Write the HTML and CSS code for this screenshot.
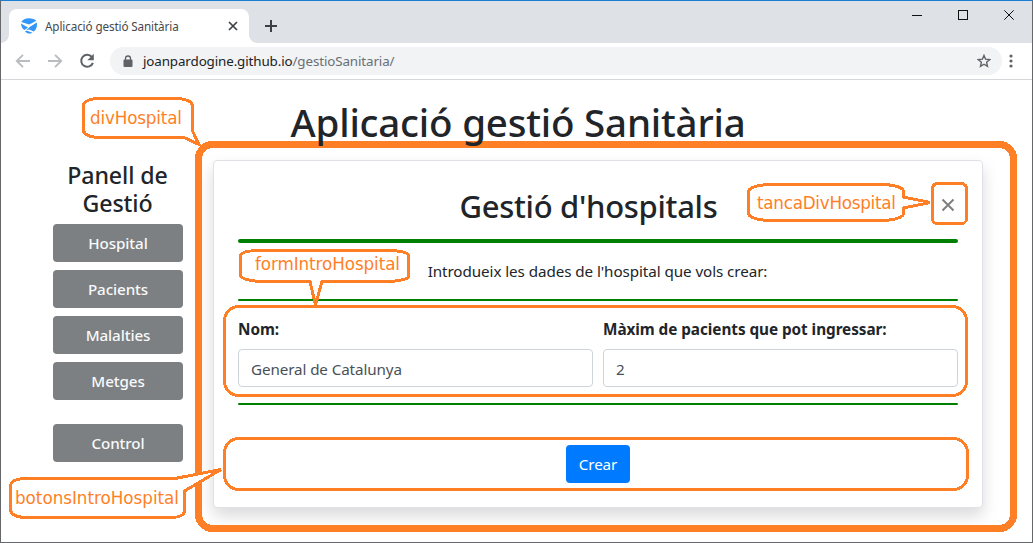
FILE: index.html
```html
<!DOCTYPE html>
<html lang="ca">
<head>
<meta charset="utf-8">
<title>Aplicació gestió Sanitària</title>
<link rel="stylesheet" href="styles.css">
</head>
<body>
<div class="window">
  <header class="tabbar">
    <div class="tab">
      <svg class="favicon" width="16" height="16" viewBox="0 0 16 16"><path fill="#3397f7" d="M.2 4C1.500 1.500 4.500.2 8 .2c3.200 0 6 .8 7.300 2.600L8.300 6.600z M0 5.400l7 4.200-3.500 2.400C1.500 11 .2 8.500 0 5.400z M15.800 4.400c.7 3.700-.5 7-3 9.200L8 11.500l-3 1L9 8.800z M4 13.200l2-.4 5.500 1.900c-2.500 1.400-5.500 1.200-7.500-1.500z"/></svg>
      <span class="tab-title">Aplicació gestió Sanitària</span>
      <svg class="tab-close" width="10" height="10" viewBox="0 0 10 10"><path d="M1 1l8 8M9 1l-8 8" stroke="#3c4043" stroke-width="1.700"/></svg>
    </div>
    <svg class="new-tab" width="12" height="12" viewBox="0 0 12 12"><path d="M6 0v12M0 6h12" stroke="#3c4043" stroke-width="2"/></svg>
    <svg class="controls" width="104" height="12" viewBox="0 0 104 12"><path d="M0 6.500h10M46.500 1.500h9v9h-9z" fill="none" stroke="#111" shape-rendering="crispEdges"/><path d="M92.300 1.300l9.400 9.400M101.700 1.300l-9.400 9.400" stroke="#111"/></svg>
  </header>
  <nav class="toolbar">
    <svg width="16" height="16" viewBox="0 0 16 16" fill="none" stroke="#babcbe" stroke-width="1.900"><path d="M15 8H2M8 1.800L1.800 8 8 14.200"/></svg>
    <svg width="16" height="16" viewBox="0 0 16 16" fill="none" stroke="#babcbe" stroke-width="1.900"><path d="M1 8h13M8 1.800L14.200 8 8 14.200"/></svg>
    <svg width="16" height="16" viewBox="0 0 16 16"><path d="M12.900 4A6 6 0 1 0 13.900 9.800" fill="none" stroke="#5f6368" stroke-width="2"/><path d="M14.800.8v6.400H8.400z" fill="#5f6368"/></svg>
    <div class="address">
      <svg width="10" height="13" viewBox="0 0 10 13"><rect x="0.500" y="4.500" width="9" height="7.500" rx="1" fill="#5f6368"/><path d="M2.500 5V3.500a2.500 2.500 0 0 1 5 0V5" fill="none" stroke="#5f6368" stroke-width="1.300"/></svg>
      <span class="url"><span class="host">joanpardogine.github.io</span>/gestioSanitaria/</span>
      <svg class="star" width="14" height="14" viewBox="0 0 14 14"><path d="M7 1.400l1.600 3.800 4.100.4-3.100 2.700.9 4L7 10.200l-3.500 2.100.9-4L1.300 5.600l4.100-.4z" fill="none" stroke="#5f6368" stroke-width="1.400"/></svg>
    </div>
    <svg width="4" height="14" viewBox="0 0 4 14" fill="#5f6368"><circle cx="2" cy="2" r="1.600"/><circle cx="2" cy="7" r="1.600"/><circle cx="2" cy="12" r="1.600"/></svg>
  </nav>
  <main class="page">
    <h1>Aplicació gestió Sanitària</h1>
    <div class="columns">
      <aside class="panel">
        <h4>Panell de Gestió</h4>
        <button class="btn">Hospital</button>
        <button class="btn">Pacients</button>
        <button class="btn">Malalties</button>
        <button class="btn">Metges</button>
        <button class="btn spaced">Control</button>
      </aside>
      <section class="card">
        <div class="card-head">
          <h2>Gestió d'hospitals</h2>
          <svg class="close" width="14" height="14" viewBox="0 0 14 14"><path d="M1.500 1.500l11 11M12.500 1.500l-11 11" stroke="#7f7f7f" stroke-width="2"/></svg>
        </div>
        <hr class="thick">
        <p>Introdueix les dades de l'hospital que vols crear:</p>
        <hr>
        <form class="fields">
          <label><span class="caption">Nom:</span><input type="text" value="General de Catalunya"></label>
          <label><span class="caption">Màxim de pacients que pot ingressar:</span><input type="text" value="2"></label>
        </form>
        <hr>
        <div class="actions"><button class="btn primary">Crear</button></div>
      </section>
    </div>
  </main>
  <svg class="notes" width="1033" height="543" viewBox="0 0 1033 543">
    <g class="outline" shape-rendering="crispEdges">
      <rect class="frame" x="198.500" y="144.500" width="815" height="384" rx="14"/>
      <rect x="224.500" y="306.500" width="742" height="89" rx="14"/>
      <rect x="224.500" y="438.500" width="743" height="51" rx="14"/>
      <rect x="932.500" y="183.500" width="34" height="40" rx="5"/>
      <path d="M99 98.500H178Q191 99.500 192.500 105V131L199 144.500 184 137.500H100Q85 137 83.500 131V105Q85 99 99 98.500z"/>
      <path d="M768 184.500H885Q902 186 903.500 191V197L930 202.500 903.500 208V214Q902 219 885 220.500H768Q750 219 748.500 214V191Q750 186 768 184.500z"/>
      <path d="M257 250.500H393Q408 252 408.500 255.500V277Q407 280 390 281.500H322L315.500 305 310 281.500H260Q242 280 240.500 276V255Q242 251 257 250.500z"/>
      <path class="filled" d="M25 478.500H175L221 469.500 184.500 491V512Q183 517 172 517.500H23Q12 516 10.500 511V485Q12 479 25 478.500z"/>
    </g>
    <g class="note-text">
      <text x="90" y="124" textLength="92">divHospital</text>
      <text x="757" y="209" textLength="139">tancaDivHospital</text>
      <text x="255" y="270" textLength="145">formIntroHospital</text>
      <text x="15" y="504" textLength="164">botonsIntroHospital</text>
    </g>
  </svg>
</div>
</body>
</html>
```
FILE: styles.css
```css
* { box-sizing: border-box; }
body {
  margin: 0;
  font-family: "Noto Sans", "Open Sans", sans-serif;
  color: #212529;
  background: #fff;
}
.window {
  position: relative;
  width: 1033px;
  height: 543px;
  overflow: hidden;
  border: 1px solid #66676b;
  border-top-color: #1a7fd4;
}
.tabbar {
  display: flex;
  height: 42px;
  padding: 8px 16px 0 8px;
  background: #dee1e6;
}
.tab {
  position: relative;
  display: flex;
  align-items: center;
  width: 240px;
  height: 34px;
  padding: 0 11px 0 12px;
  background: #fff;
  border-radius: 8px 8px 0 0;
}
.tab::before, .tab::after {
  content: "";
  position: absolute;
  bottom: 0;
  width: 8px;
  height: 8px;
}
.tab::before { left: -8px; background: radial-gradient(circle at 0 0, #dee1e6 7.5px, #fff 8px); }
.tab::after { right: -8px; background: radial-gradient(circle at 100% 0, #dee1e6 7.5px, #fff 8px); }
.tab-title {
  margin-left: 8px;
  font-size: 11.7px;
  letter-spacing: -0.12px;
  color: #45484c;
  white-space: nowrap;
}
.tab-close { margin-left: auto; }
.new-tab { margin: 11px 0 0 16px; }
.controls { margin: 0 0 0 auto; }
.toolbar {
  display: flex;
  align-items: center;
  gap: 16px;
  height: 37px;
  padding: 0 19px 0 14px;
  border-bottom: 1px solid #d5d7da;
}
.address {
  display: flex;
  flex: 1;
  align-items: center;
  height: 28px;
  margin-right: -9px;
  margin-left: -1px;
  padding: 0 11px 0 13px;
  border-radius: 14px;
  background: #f1f3f4;
}
.url {
  margin-left: 10px;
  font-size: 13.4px;
  letter-spacing: -0.12px;
  color: #6b6f74;
  white-space: nowrap;
}
.host { color: #202124; }
.star { margin-left: auto; }
.page { padding: 18px 49px 0 52px; }
h1, h2, h4, p { margin: 0; font-weight: 500; }
h1 {
  position: relative;
  z-index: 2;
  height: 48px;
  font-size: 38.5px;
  line-height: 48px;
  letter-spacing: -0.2px;
  text-align: center;
  white-space: nowrap;
}
.columns {
  display: flex;
  gap: 30px;
  margin-top: 14px;
}
.panel {
  display: flex;
  flex-direction: column;
  width: 130px;
  gap: 8px;
}
h4 {
  height: 56px;
  padding: 1px 1px 0 0;
  font-size: 23.2px;
  line-height: 28px;
  letter-spacing: -0.1px;
  text-align: center;
}
.btn {
  height: 38px;
  padding: 0;
  border: 0;
  border-radius: 4px;
  background: #7c8082;
  color: #f8f9fa;
  font: 500 15.2px/38px "Noto Sans", sans-serif;
  letter-spacing: -0.1px;
}
.spaced { margin-top: 16px; }
.card {
  width: 770px;
  height: 348px;
  padding: 24px;
  border: 1px solid #dee2e6;
  border-radius: 4px;
  background: #fff;
  box-shadow: 0 8px 16px rgba(0, 0, 0, .15);
}
.card-head {
  display: flex;
  justify-content: flex-end;
  height: 54px;
  padding: 13px 3px 0 0;
}
.card-head h2 {
  flex: 1;
  margin-top: -12px;
  padding-right: 2px;
  font-size: 31px;
  line-height: 40px;
  letter-spacing: -0.3px;
  text-align: center;
}
hr {
  height: 2px;
  margin: 0;
  border: 0;
  border-radius: 1px;
  background: green;
}
hr.thick { height: 4px; border-radius: 2px; }
.card p {
  height: 56px;
  padding: 16px 1px 0 0;
  font-size: 15.2px;
  font-weight: 400;
  line-height: 24px;
  letter-spacing: -0.07px;
  text-align: center;
}
.fields {
  display: grid;
  grid-template-columns: 1fr 1fr;
  gap: 10px;
  padding: 16px 0;
}
.fields label {
  display: flex;
  flex-direction: column;
  gap: 8px;
  font-size: 15.3px;
  font-weight: 700;
  line-height: 24px;
  letter-spacing: -0.05px;
}
.fields input {
  width: 100%;
  height: 38px;
  padding: 2px 12px 0;
  border: 1px solid #ced4da;
  border-radius: 4px;
  color: #495057;
  font: 15.2px "Noto Sans", sans-serif;
  letter-spacing: -0.1px;
}
.actions { padding-top: 40px; text-align: center; }
.primary {
  width: 64px;
  background: #007bff;
  color: #fff;
  font-weight: 400;
}
.notes { position: absolute; top: -1px; left: -1px; z-index: 1; }
.outline { fill: none; stroke: #ff7f27; stroke-width: 3; }
.frame { stroke-width: 7; }
.filled { fill: #fff; }
.note-text {
  fill: #ff7f27;
  font: 16.8px "DejaVu Sans", sans-serif;
}
```
